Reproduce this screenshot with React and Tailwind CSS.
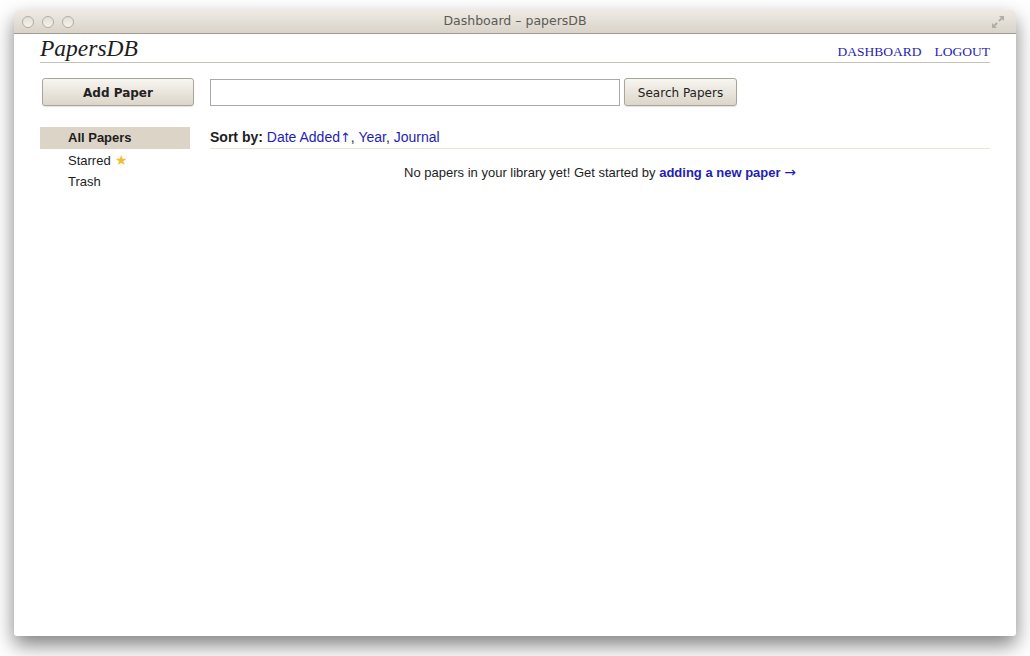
const sans = { fontFamily: '"Liberation Sans", Arial, sans-serif' };
const ui = { fontFamily: '"DejaVu Sans", "Liberation Sans", sans-serif' };
const serif = { fontFamily: '"Liberation Serif", "Times New Roman", serif' };

function TrafficLight() {
  return (
    <span className="block w-[12px] h-[12px] rounded-full border border-[#b3aea5] bg-gradient-to-b from-[#e4e0d8] to-[#f4f1ec]" />
  );
}

function ResizeIcon() {
  return (
    <svg width="14" height="14" viewBox="0 0 14 14">
      <path d="M8 1h5v5l-1.8-1.8-2.6 2.6-1.4-1.4 2.6-2.6z" fill="#b3aea5" />
      <path d="M6 13H1V8l1.8 1.8 2.6-2.6 1.4 1.4-2.6 2.6z" fill="#b3aea5" />
    </svg>
  );
}

export default function App() {
  const nav = ["DASHBOARD", "LOGOUT"];
  const folders = [
    { label: "All Papers", active: true },
    { label: "Starred", star: true },
    { label: "Trash" },
  ];

  return (
    <div className="w-[1030px] h-[656px] bg-white pt-[10px] pl-[14px]">
      <div className="w-[1002px] h-[626px] bg-white rounded-t-[5px] rounded-b-[3px] shadow-[0_9px_20px_rgba(0,0,0,0.5)] flex flex-col overflow-hidden">
        {/* title bar */}
        <div className="h-[24px] shrink-0 border-b border-[#a19c94] bg-gradient-to-b from-[#efebe4] to-[#d9d3c9] flex items-center px-[8px]">
          <div className="flex gap-[8px] w-[60px]">
            <TrafficLight />
            <TrafficLight />
            <TrafficLight />
          </div>
          <div className="flex-1 text-center text-[12.5px] text-[#5c5a56]" style={ui}>
            Dashboard – papersDB
          </div>
          <div className="w-[60px] flex justify-end pr-[3px]">
            <ResizeIcon />
          </div>
        </div>

        {/* page */}
        <div className="px-[26px]">
          <header className="h-[29px] border-b border-[#c6c2b9] flex items-baseline justify-between">
            <div className="italic text-[23.5px] leading-[28px] text-[#1d1d1d]" style={serif}>
              PapersDB
            </div>
            <nav className="flex gap-[13px] text-[13.5px] leading-[30px] text-[#1e1eb4]" style={serif}>
              {nav.map((n) => (
                <a key={n} href="#">
                  {n}
                </a>
              ))}
            </nav>
          </header>

          <div className="grid grid-cols-[170px_1fr] mt-[15px]">
            <aside>
              <button
                className="ml-[2px] w-[152px] h-[28px] pt-[1px] rounded-[3px] border border-[#a9a59d] bg-gradient-to-b from-[#f8f6f1] to-[#dcd5ca] shadow-[0_1px_1px_rgba(0,0,0,0.12)] text-[12px] font-bold text-[#222]"
                style={ui}
              >
                Add Paper
              </button>
              <ul className="mt-[21px] w-[150px] text-[13px] text-[#1d1d1d]" style={sans}>
                {folders.map((f) => (
                  <li
                    key={f.label}
                    className={
                      f.active
                        ? "h-[22px] leading-[22px] pl-[28px] bg-[#dcd4c7] font-bold"
                        : "h-[22px] leading-[22px] pl-[28px]"
                    }
                  >
                    {f.label}
                    {f.star && <span className="ml-[4px] text-[#f4bd2f] text-[14px]">★</span>}
                  </li>
                ))}
              </ul>
            </aside>

            <main>
              <div className="flex items-start gap-[4px]">
                <input
                  type="text"
                  className="mt-[1px] w-[410px] h-[27px] border border-[#a9a9a9] bg-white outline-none"
                />
                <button
                  className="w-[113px] h-[28px] pt-[1px] rounded-[3px] border border-[#a9a59d] bg-gradient-to-b from-[#f8f6f1] to-[#dcd5ca] shadow-[0_1px_1px_rgba(0,0,0,0.12)] text-[12px] text-[#222]"
                  style={ui}
                >
                  Search Papers
                </button>
              </div>

              <div
                className="mt-[22px] h-[21px] leading-[19px] border-b border-[#ebe5d6] text-[14px] text-[#1d1d1d]"
                style={sans}
              >
                <span className="font-bold">Sort by:</span>{" "}
                <a href="#" className="text-[#1e1eb4]">
                  Date Added<span style={ui} className="text-[13px]">↑</span>
                </a>
                ,{" "}
                <a href="#" className="text-[#1e1eb4]">Year</a>,{" "}
                <a href="#" className="text-[#1e1eb4]">Journal</a>
              </div>

              <p className="mt-[13px] leading-[21px] text-center text-[13px] text-[#1d1d1d]" style={sans}>
                No papers in your library yet! Get started by{" "}
                <a href="#" className="font-bold text-[#1e1eb4]">
                  adding a new paper <span style={ui} className="font-normal text-[14px]">→</span>
                </a>
              </p>
            </main>
          </div>
        </div>
      </div>
    </div>
  );
}
